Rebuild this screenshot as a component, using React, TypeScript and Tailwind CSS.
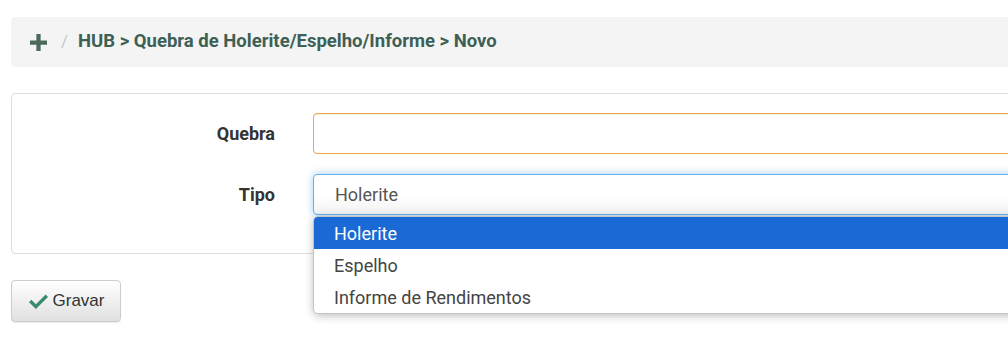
import { useState } from 'react';

// ── Helpers ───────────────────────────────────────────────────────────────────

const TIPOS = ['Holerite', 'Espelho', 'Informe de Rendimentos'];

function PlusIcon() {
  return (
    <svg width="17" height="17" viewBox="0 0 16 16" className="shrink-0">
      <path d="M6 0h4v6h6v4h-6v6H6v-6H0V6h6z" fill="#4a6b59" />
    </svg>
  );
}

function CheckIcon() {
  return (
    <svg width="21" height="17" viewBox="0 0 21 17" className="shrink-0">
      <path
        d="M1 9.2 3.4 6.8 7.9 11.2 17.6 1.5 20 3.9 7.9 16z"
        fill="#3a8a72"
      />
    </svg>
  );
}

// ── Main Component ────────────────────────────────────────────────────────────

export default function App() {
  const [selected] = useState(0);

  return (
    <div className="w-[1008px] h-[343px] overflow-hidden bg-white font-['Roboto',sans-serif] text-[#333]">
      <div className="w-[1040px] pl-[11px] pt-[17px]">
        {/* ── Breadcrumb ─────────────────────────────────────────────────── */}
        <div className="h-[50px] bg-[#f4f4f4] rounded-[4px] flex items-center pl-[19px]">
          <PlusIcon />
          <span className="ml-[14px] text-[#c8c8c8] text-[17px]">/</span>
          <span className="ml-[10px] text-[18.5px] font-bold text-[#3e5f55]">
            HUB &gt; Quebra de Holerite/Espelho/Informe &gt; Novo
          </span>
        </div>

        {/* ── Form Panel ─────────────────────────────────────────────────── */}
        <div className="mt-[26px] border border-[#dddddd] rounded-[4px] pt-[19px] pb-[38px]">
          <div className="flex items-center gap-[38px]">
            <label className="w-[263px] text-right text-[18px] font-bold text-[#333]">
              Quebra
            </label>
            <div className="flex-1 h-[41px] rounded-[4px] border border-[#f0a640] bg-white shadow-[inset_0_1px_1px_rgba(0,0,0,0.075)]" />
          </div>

          <div className="flex items-center gap-[38px] mt-[20px]">
            <label className="w-[263px] text-right text-[18px] font-bold text-[#333]">
              Tipo
            </label>
            <div className="relative flex-1">
              <div className="h-[41px] rounded-[4px] border border-[#66afe9] bg-gradient-to-b from-white via-white to-[#f2f2f2] shadow-[0_0_8px_rgba(102,175,233,0.6)] flex items-center pl-[21px] text-[18px] text-[#555]">
                {TIPOS[selected]}
              </div>

              {/* Open dropdown list */}
              <div className="absolute left-0 right-0 top-[42px] z-10 bg-white border border-[#c4c4c4] rounded-[5px] overflow-hidden shadow-[0_2px_8px_rgba(0,0,0,0.25)]">
                {TIPOS.map((t, i) => (
                  <div
                    key={t}
                    className={
                      i === selected
                        ? 'h-[32px] flex items-center pl-[20px] text-[18px] bg-[#1a69d4] text-white'
                        : 'h-[32px] flex items-center pl-[20px] text-[18px] text-[#444]'
                    }
                  >
                    {t}
                  </div>
                ))}
              </div>
            </div>
          </div>
        </div>

        {/* ── Actions ────────────────────────────────────────────────────── */}
        <div className="mt-[26px]">
          <button className="h-[42px] w-[110px] rounded-[4px] border border-[#cccccc] bg-gradient-to-b from-white to-[#e0e0e0] shadow-[0_1px_1px_rgba(0,0,0,0.08)] flex items-center justify-center gap-[4px] font-['Liberation_Sans',Arial,sans-serif] text-[17px] text-[#333]">
            <CheckIcon />
            Gravar
          </button>
        </div>
      </div>
    </div>
  );
}
